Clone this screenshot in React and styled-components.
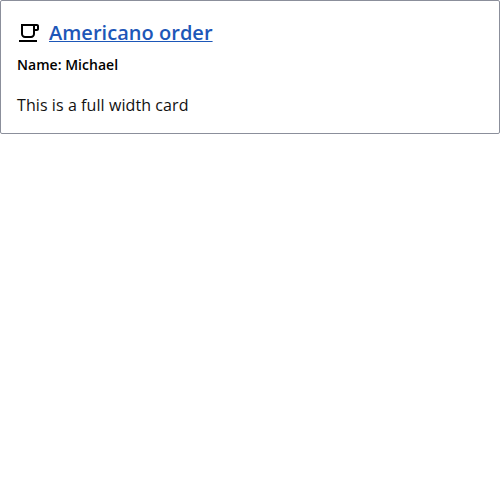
import React from "react";
import styled, { createGlobalStyle } from "styled-components";

const GlobalStyle = createGlobalStyle`
  body { margin: 0; background: #fff; }
`;

const Card = styled.article`
  box-sizing: border-box;
  width: 100%;
  height: 134px;
  padding: 16px;
  border: 1px solid #8b8f9b;
  border-radius: 2px;
  font-family: "Open Sans", sans-serif;
  color: #000;
`;

const Header = styled.header`
  display: flex;
  align-items: center;
  gap: 8px;
  height: 32px;
`;

const CupIcon = styled.svg`
  width: 24px;
  height: 24px;
  fill: #000;
`;

const TitleLink = styled.a`
  font-size: 20px;
  line-height: 32px;
  font-weight: 600;
  letter-spacing: 0.03px;
  color: #1d57b8;
  text-decoration: underline;
  text-decoration-thickness: 1px;
`;

const Subheading = styled.div`
  font-size: 14px;
  line-height: 24px;
  font-weight: 600;
  letter-spacing: 0.03px;
  margin-top: 4px;
`;

const Message = styled.p`
  margin: 16px 0 0;
  font-size: 16px;
  line-height: 24px;
  letter-spacing: 0.08px;
  color: #111;
`;

export default function App() {
  return (
    <>
      <GlobalStyle />
      <Card>
        <Header>
          <CupIcon viewBox="0 0 24 24" aria-hidden="true">
            <path d="M16 5v8c0 1.1-.9 2-2 2H8c-1.1 0-2-.9-2-2V5h10m4-2H4v10c0 2.21 1.79 4 4 4h6c2.21 0 4-1.79 4-4v-3h2c1.11 0 2-.9 2-2V5c0-1.11-.89-2-2-2zm-2 5V5h2v3h-2zm2 11H2v2h18v-2z" />
          </CupIcon>
          <TitleLink href="#">Americano order</TitleLink>
        </Header>
        <Subheading>Name: Michael</Subheading>
        <Message>This is a full width card</Message>
      </Card>
    </>
  );
}
